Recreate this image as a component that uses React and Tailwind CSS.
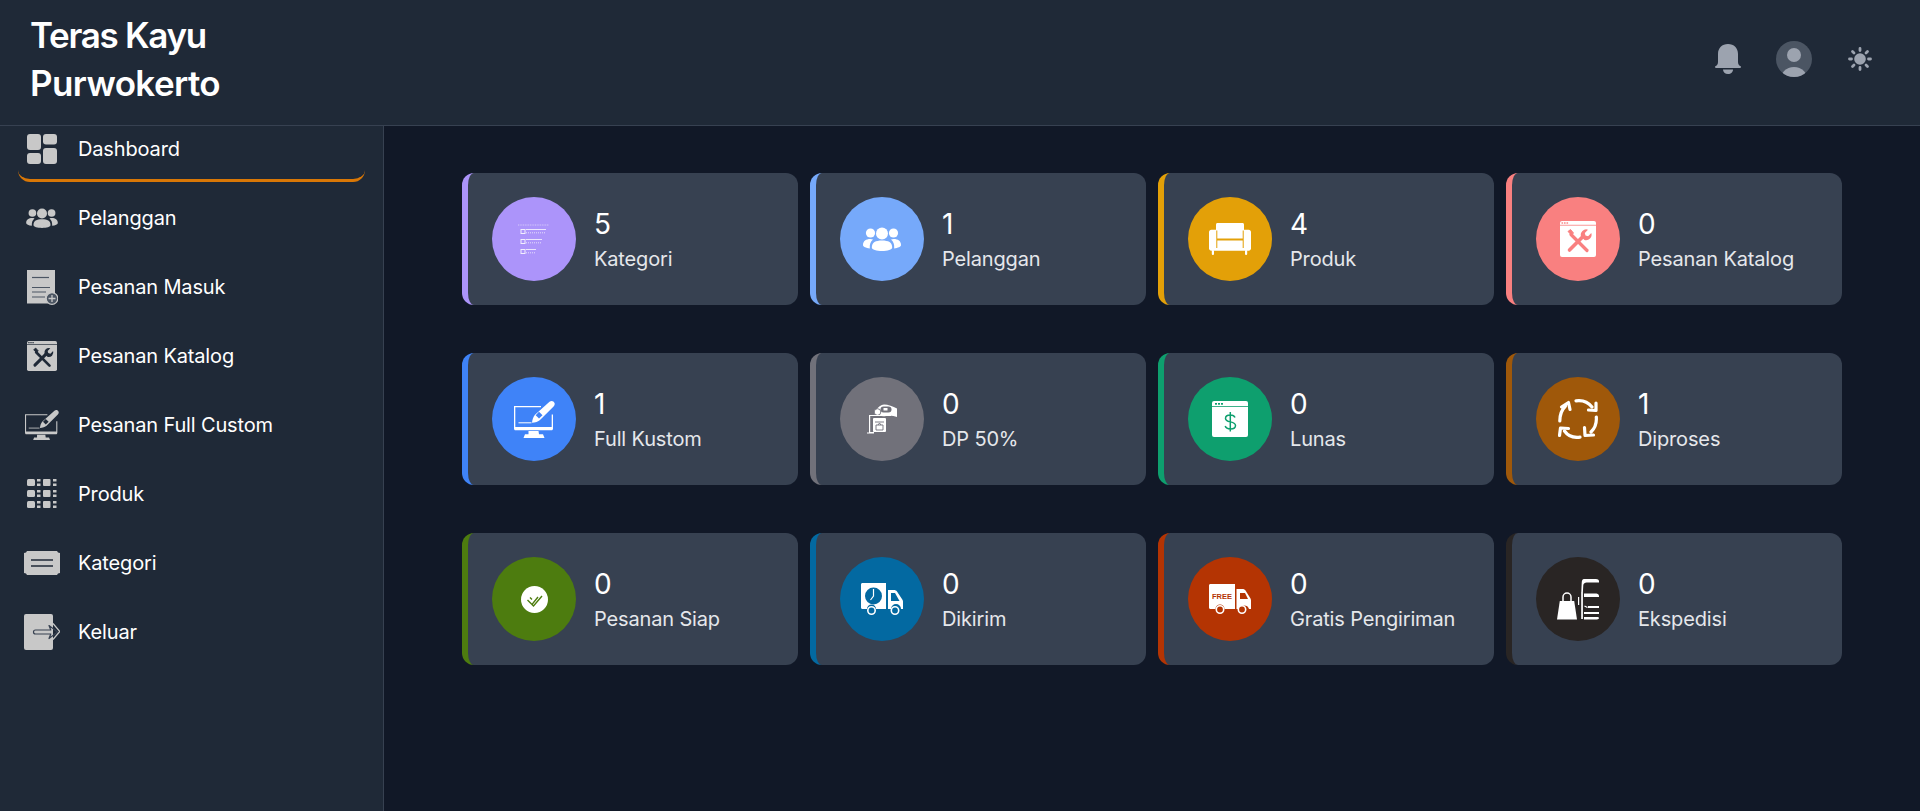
import React from "react";

const People = ({ w = 38, h = 24, c = "#fff" }) => (
  <svg width={w} height={h} viewBox="0 0 38 24" fill={c}>
    <circle cx="19" cy="6.5" r="6" />
    <circle cx="7.5" cy="6" r="4.6" />
    <circle cx="30.5" cy="6" r="4.6" />
    <path d="M8.8 20.5C8.8 15.5 12.5 13.6 19 13.6s10.2 1.9 10.2 6.9C29.2 22.8 24.5 24 19 24S8.8 22.8 8.8 20.5Z" />
    <path d="M7.3 12C3 12 0 14 0 18c0 1.8 3 3 6.8 3.4C6.6 17.6 7.4 14.6 10 12.6 9.2 12.2 8.3 12 7.3 12Z" />
    <path d="M30.7 12C35 12 38 14 38 18c0 1.8-3 3-6.8 3.4C31.4 17.6 30.6 14.6 28 12.6 28.8 12.2 29.7 12 30.7 12Z" />
  </svg>
);

const Tools = ({ w = 36, c = "#fff", bg = "#f98080" }) => (
  <svg width={w} height={w} viewBox="0 0 36 36">
    <rect x="0" y="0" width="36" height="36" rx="2" fill={c} />
    <rect x="0" y="3.8" width="36" height="0.8" fill={bg} />
    <rect x="1.5" y="1.3" width="1.6" height="1.4" fill={bg} />
    <rect x="4" y="1.3" width="1.6" height="1.4" fill={bg} />
    <rect x="6.5" y="1.3" width="1.6" height="1.4" fill={bg} />
    <path d="M11 13.5 L27 29.5" stroke={bg} strokeWidth="3.2" strokeLinecap="round" />
    <path d="M8 10.5 L10.5 8.5 L13.5 12 L11.5 14 Z" fill={bg} stroke={bg} strokeWidth="1" strokeLinejoin="round" />
    <path d="M9.5 29 L22.5 16" stroke={bg} strokeWidth="3.6" strokeLinecap="round" />
    <path d="M21 15.5a5.5 5.5 0 0 1 7-6.8l-3.2 3.2 .7 2.6 2.6 .7 3.2-3.2a5.5 5.5 0 0 1-6.8 7Z" fill={bg} />
  </svg>
);

const Monitor = ({ w = 41, c = "#fff", bg = "#3f83f8" }) => (
  <svg width={w} height={(w * 37) / 41} viewBox="0 0 41 37" fill={c}>
    <path fillRule="evenodd" d="M0 5h27v1.300H1.300V26h36.400V13.500H39v14c0 1-.6 1.800-1.500 1.800H1.500C.6 29.300 0 28.500 0 27.500Z" />
    <path d="M14.500 30h10l.5 3.200h4L30.500 37H9.500l1.500-3.800h3.500Z" />
    <rect x="4.500" y="21.300" width="13" height="1" />
    <path d="M35.500 .8c1.800-1.400 4.300-.8 5 1.200 .5 1.300 .1 2.500-.9 3.500L26 19c-1.500 1.400-5 2.800-8 2.800 .2-3 1.500-6.500 3-8Z" />
    <path d="M25 10.800l3.500 3.500-3.500 3.200-3.300-3.300Z" fill={bg} />
  </svg>
);

const Sofa = ({ c = "#fff", bg = "#e3a008" }) => (
  <svg width="42" height="32" viewBox="0 0 42 32" fill={c}>
    <path d="M7 1.500C7 .6 7.600 0 8.500 0h25c.9 0 1.500.6 1.500 1.500V8h-28Z" />
    <path d="M0 9c0-1.300 1-2.300 2.300-2.300h37.400C41 6.700 42 7.700 42 9v16.500c0 1.200-1 2.300-2.300 2.300H2.300C1 27.800 0 26.700 0 25.500Z" />
    <path d="M8 15.500h26v2H8Z" fill={bg} />
    <path d="M7.300 7.500h1v17.500h-1ZM33.700 7.500h1v17.500h-1Z" fill={bg} />
    <rect x="2.800" y="27" width="2.200" height="5" rx="1" />
    <rect x="36" y="27" width="2.200" height="5" rx="1" />
  </svg>
);

const Window = ({ bg = "#0e9f6e" }) => (
  <svg width="36" height="36" viewBox="0 0 36 36">
    <rect width="36" height="36" rx="2" fill="#fff" />
    <rect y="5" width="36" height="0.8" fill={bg} />
    <rect x="3" y="2" width="2" height="1.7" fill={bg} />
    <rect x="6" y="2" width="2" height="1.7" fill={bg} />
    <rect x="9" y="2" width="2" height="1.7" fill={bg} />
    <path d="M23 16.500c-.6-1.600-2.400-2.500-4.700-2.500-2.800 0-4.800 1.300-4.800 3.400 0 4.600 10 2.300 10 7.100 0 2.100-2.200 3.500-5 3.500-2.600 0-4.700-1-5.300-2.900M18.300 11v19.500" fill="none" stroke={bg} strokeWidth="1.500" />
  </svg>
);

const Cycle = ({ c = "#fff" }) => (
  <svg width="40" height="40" viewBox="0 0 40 40" fill="none" stroke={c} strokeWidth="3.2" strokeLinecap="round" strokeLinejoin="round">
    <path d="M1.800 22C1.800 16 3.500 11 7.500 7" />
    <path d="M3.500 8 L10.500 3.500 L12 10.500" />
    <path d="M18 1.800C24 1 30 3 34 8" />
    <path d="M38 4 L38 11.500 L30.500 11" />
    <path d="M38.300 18C38.800 24 37 29 33 33" />
    <path d="M26.500 28.500 L27 36.500 L35.500 36" />
    <path d="M22 38.200C16 39 10 37 6.500 32" />
    <path d="M1.500 36.500 L2.500 29 L10.500 29.500" />
  </svg>
);

const CheckBadge = () => (
  <svg width="27" height="27" viewBox="0 0 27 27">
    <circle cx="13.500" cy="13.500" r="13.500" fill="#fff" />
    <path d="M6.500 14l4.500 4.500 6-7.500M11 18.500l1.500 1.500L21 10M9 11.500l2 2" fill="none" stroke="#4d7c0f" strokeWidth="1.400" />
  </svg>
);

const TimeTruck = () => (
  <svg width="42" height="32" viewBox="0 0 42 32">
    <path d="M1.500 0H25v26H15a4.500 4.500 0 0 0-9 0H1.500C.6 26 0 25.400 0 24.500V1.500C0 .6.600 0 1.500 0Z" fill="#fff" />
    <path d="M27 7h6c1.300 0 2.300.5 3 1.500l5.300 8c.4.600.7 1.300.7 2V26h-2a5 5 0 0 0-10 0h-3Z" fill="#fff" />
    <path d="M30 10v8h8.500l-4.500-8Z" fill="#0369a1" />
    <circle cx="12.500" cy="13" r="8.500" fill="#0369a1" />
    <path d="M12.500 6v7l-3 4" stroke="#fff" strokeWidth="1.200" fill="none" />
    <circle cx="10.500" cy="27.500" r="3.700" fill="#0369a1" stroke="#fff" strokeWidth="1.600" />
    <circle cx="34" cy="27.500" r="3.700" fill="#0369a1" stroke="#fff" strokeWidth="1.600" />
  </svg>
);

const FreeTruck = () => (
  <svg width="42" height="30" viewBox="0 0 42 30">
    <path d="M1.500 0H26v25H15.500a4.500 4.500 0 0 0-9 0H1.500C.6 25 0 24.400 0 23.500V1.500C0 .6.600 0 1.500 0Z" fill="#fff" />
    <path d="M27.500 5h6c1.300 0 2.300.5 3 1.500l5 8c.3.600.5 1.300.5 2V25h-2a5 5 0 0 0-9.500 0h-3Z" fill="#fff" />
    <path d="M31 9v6h8l-3-6Z" fill="#b43403" />
    <text x="13" y="15" textAnchor="middle" fontSize="7.500" fontWeight="700" fontFamily="Liberation Sans, sans-serif" fill="#b43403">FREE</text>
    <circle cx="11" cy="25.500" r="3.700" fill="#b43403" stroke="#fff" strokeWidth="1.600" />
    <circle cx="33" cy="25.500" r="3.700" fill="#b43403" stroke="#fff" strokeWidth="1.600" />
  </svg>
);

const Expedition = () => (
  <svg width="42" height="41" viewBox="0 0 42 41">
    <path d="M27 0h12c1.500 0 3 .8 3 2v1.500H29.500c-1.500 0-3 1-3.200 2.500l-.4 7h-1.600l.4-9C24.800 1.500 25.500 0 27 0Z" fill="#fff" />
    <path d="M24.200 13h1.700v27h-1.700Z" fill="#fff" />
    <path d="M27 14.500h11c2 0 4 .5 4 2.500v1H27ZM31 27h11v2H31ZM27 33h15v2H27ZM27 38h13c1 0 2 .3 2 1s-1 1.500-2 1.500H27Z" fill="#fff" />
    <rect x="21" y="18" width="1.200" height="8" fill="#fff" />
    <path d="M27.500 27l3 1.500" stroke="#fff" strokeWidth="1.300" />
    <path d="M2.800 22h14.400l2.800 18.500H0Z" fill="#fff" />
    <path d="M6 25v-7a4 4 0 0 1 8 0v7" fill="none" stroke="#fff" strokeWidth="1.500" />
  </svg>
);

const ListIcon = () => (
  <svg width="32" height="30" viewBox="0 0 32 30" fill="#fff" opacity="0.85">
    <path d="M0 1h31" stroke="#fff" strokeWidth="1" strokeDasharray="1 .7" opacity=".6" />
    <rect x="3" y="5.5" width="4" height="4" fill="none" stroke="#fff" strokeWidth="1" />
    <rect x="8" y="5" width="20" height=".9" />
    <path d="M8 8.800h20" stroke="#fff" strokeWidth=".8" strokeDasharray="1 1" />
    <rect x="3" y="15.500" width="4" height="4" fill="none" stroke="#fff" strokeWidth="1" />
    <rect x="8" y="15" width="16" height=".9" />
    <path d="M8 18.800h16" stroke="#fff" strokeWidth=".8" strokeDasharray="1 1" />
    <rect x="3" y="25.500" width="4" height="4" fill="none" stroke="#fff" strokeWidth="1" />
    <rect x="8" y="25" width="10" height=".9" />
    <path d="M8 28.800h10" stroke="#fff" strokeWidth=".8" strokeDasharray="1 1" />
  </svg>
);

const DpIcon = () => (
  <svg width="30" height="30" viewBox="0 0 30 30">
    <path d="M9 6c2-3 5-5.500 8-5.500 4 0 9 2 13 4V13c-3-1-7-1.500-11-1-2 .3-5 .3-7-.5Z" fill="#fff" />
    <circle cx="10.500" cy="8" r="3.300" fill="#fff" stroke="#71717a" strokeWidth=".9" />
    <rect x="13.500" y="2.500" width="11" height="6" rx="3" fill="#71717a" />
    <rect x="16.500" y="4" width="4" height="2.500" fill="#fff" />
    <path d="M2 11h22v1H3.200v16H7v1.500H0v-1h2Z" fill="#fff" />
    <rect x="6" y="14" width="13" height="14" rx="1" fill="#fff" />
    <path d="M8 18h9M9 21h7v5H9ZM11 21l1.500-2 1.500 2" fill="none" stroke="#71717a" strokeWidth=".9" />
  </svg>
);

const nav = [
  { label: "Dashboard", icon: (
    <svg width="30" height="30" viewBox="0 0 30 30" fill="#c8c8c8">
      <rect x="0" y="0" width="14" height="16" rx="3" />
      <rect x="16" y="0" width="14" height="10.5" rx="3" />
      <rect x="0" y="19" width="14" height="11" rx="3" />
      <rect x="16" y="14" width="14" height="16" rx="3" />
    </svg>
  ) },
  { label: "Pelanggan", icon: <People w={32} h={20} c="#c8c8c8" /> },
  { label: "Pesanan Masuk", icon: (
    <svg width="32" height="35" viewBox="0 0 32 35">
      <rect x="1" y="0" width="28" height="33.500" fill="#c8c8c8" />
      <path d="M6 7.500h17" stroke="#4b5563" strokeWidth="1.200" />
      <path d="M6 17.500h18M6 22h14M6 27h13" stroke="#4b5563" strokeWidth="1.200" />
      <circle cx="26" cy="28.500" r="5.800" fill="#4b5563" stroke="#c8c8c8" strokeWidth="1.200" />
      <path d="M26 25v7M22.500 28.500h7" stroke="#c8c8c8" strokeWidth="1.300" />
    </svg>
  ) },
  { label: "Pesanan Katalog", icon: <Tools w={30} c="#c8c8c8" bg="#1f2937" /> },
  { label: "Pesanan Full Custom", icon: <Monitor w={34} c="#c8c8c8" bg="#1f2937" /> },
  { label: "Produk", icon: (
    <svg width="30" height="30" viewBox="0 0 30 30" fill="#c8c8c8">
      <rect x="0" y="0" width="8" height="7" rx="1.500" /><rect x="10" y="0" width="3.500" height="2.500" /><rect x="10" y="4.500" width="3.500" height="2.500" /><rect x="16" y="0" width="7.500" height="7" rx="1" /><rect x="26" y="0" width="3.500" height="2.500" /><rect x="26" y="4.500" width="3.500" height="2.500" />
      <rect x="0" y="11" width="8" height="7" rx="1.500" /><rect x="10" y="11" width="3.500" height="2.500" /><rect x="10" y="15.500" width="3.500" height="2.500" /><rect x="16" y="11" width="7.500" height="7" rx="1" /><rect x="26" y="11" width="3.500" height="2.500" /><rect x="26" y="15.500" width="3.500" height="2.500" />
      <rect x="0" y="22" width="8" height="7" rx="1.500" /><rect x="10" y="22" width="3.500" height="2.500" /><rect x="10" y="26.500" width="3.500" height="2.500" /><rect x="16" y="22" width="7.500" height="7" rx="1" /><rect x="26" y="22" width="3.500" height="2.500" /><rect x="26" y="26.500" width="3.500" height="2.500" />
    </svg>
  ) },
  { label: "Kategori", icon: (
    <svg width="36" height="24" viewBox="0 0 36 24">
      <path d="M3 0h30l1 1.500 2 .5v20l-2 .5-1 1.500H3l-1-1.500-2-.5V2l2-.5Z" fill="#c8c8c8" />
      <path d="M7 9h22M7 15h22" stroke="#1f2937" strokeWidth="1.400" />
    </svg>
  ) },
  { label: "Keluar", icon: (
    <svg width="36" height="36" viewBox="0 0 36 36">
      <rect x="0" y="0" width="29" height="36" rx="2" fill="#c8c8c8" />
      <path d="M11.500 16h15.300l-1.800-4.500L33.500 18 25 24.500l1.800-4.500H11.500a2 2 0 0 1 0-4Z" fill="none" stroke="#374151" strokeWidth="1.200" strokeLinejoin="round" />
      <path d="M29 9.500 L35.800 17.500 L29 25.500" fill="none" stroke="#c8c8c8" strokeWidth="1.200" />
    </svg>
  ) },
];

const stats = [
  { n: "5", label: "Kategori", border: "border-[#ac94fa]", bg: "bg-[#ac94fa]", icon: <ListIcon /> },
  { n: "1", label: "Pelanggan", border: "border-[#76a9fa]", bg: "bg-[#76a9fa]", icon: <People /> },
  { n: "4", label: "Produk", border: "border-[#e3a008]", bg: "bg-[#e3a008]", icon: <Sofa /> },
  { n: "0", label: "Pesanan Katalog", border: "border-[#f98080]", bg: "bg-[#f98080]", icon: <Tools /> },
  { n: "1", label: "Full Kustom", border: "border-[#3f83f8]", bg: "bg-[#3f83f8]", icon: <Monitor /> },
  { n: "0", label: "DP 50%", border: "border-[#71717a]", bg: "bg-[#71717a]", icon: <DpIcon /> },
  { n: "0", label: "Lunas", border: "border-[#0e9f6e]", bg: "bg-[#0e9f6e]", icon: <Window /> },
  { n: "1", label: "Diproses", border: "border-[#9f580a]", bg: "bg-[#9f580a]", icon: <Cycle /> },
  { n: "0", label: "Pesanan Siap", border: "border-[#4d7c0f]", bg: "bg-[#4d7c0f]", icon: <CheckBadge /> },
  { n: "0", label: "Dikirim", border: "border-[#0369a1]", bg: "bg-[#0369a1]", icon: <TimeTruck /> },
  { n: "0", label: "Gratis Pengiriman", border: "border-[#b43403]", bg: "bg-[#b43403]", icon: <FreeTruck /> },
  { n: "0", label: "Ekspedisi", border: "border-[#292524]", bg: "bg-[#292524]", icon: <Expedition /> },
];

export default function App() {
  return (
    <div className="h-screen overflow-hidden flex flex-col bg-[#111827] font-['Inter',sans-serif]">
      <header className="h-[126px] shrink-0 flex items-start justify-between bg-[#1f2937] border-b border-[#374151]">
        <div className="w-[300px] pl-[30px] pt-[11px] text-[35px] leading-[48px] font-semibold text-white">
          <div className="tracking-[-1.3px]">Teras Kayu</div>
          <div className="tracking-[-0.6px]">Purwokerto</div>
        </div>
        <div className="flex items-center pt-[41px] pr-[48px]">
          <svg width="26" height="30" viewBox="0 0 26 30" fill="#9ca3af">
            <path d="M13 0c6 0 10 4 10 10v8c0 2 1 3.500 3 4.500 0 1-.5 1.500-1.500 1.500h-23C.5 24 0 23.500 0 22.500 2 21.500 3 20 3 18v-8C3 4 7 0 13 0Z" />
            <path d="M8 25.500h10c0 2.500-2 4.500-5 4.500s-5-2-5-4.500Z" />
          </svg>
          <div className="ml-[35px] w-9 h-9 rounded-full bg-[#4b5563] overflow-hidden flex flex-col items-center">
            <div className="mt-[7px] w-[14px] h-[14px] shrink-0 rounded-full bg-[#9ca3af]" />
            <div className="mt-[5px] w-[28px] h-[28px] shrink-0 rounded-full bg-[#9ca3af]" />
          </div>
          <svg className="ml-[36px]" width="24" height="24" viewBox="0 0 24 24" fill="#9ca3af" stroke="#9ca3af">
            <circle cx="12" cy="12" r="5.800" stroke="none" />
            <path d="M12 1.500v2M12 20.500v2M1.500 12h2M20.500 12h2M4.500 4.500l1.500 1.500M18 18l1.500 1.500M4.500 19.500L6 18M18 6l1.500-1.500" strokeWidth="2.800" strokeLinecap="round" />
          </svg>
        </div>
      </header>
      <div className="flex-1 flex min-h-0">
        <aside className="w-[384px] shrink-0 bg-[#1f2937] border-r border-[#374151] px-[18px] flex flex-col gap-[3px]">
          {nav.map((item, i) => (
            <div
              key={item.label}
              className={
                i === 0
                  ? "h-[56px] pb-[8px] flex items-center rounded-b-[12px] border-b-[3px] border-[#d97706]"
                  : "h-[66px] flex items-center"
              }
            >
              <span className="w-[36px] ml-[6px] flex justify-center shrink-0">{item.icon}</span>
              <span className="ml-[18px] text-[20px] leading-[28px] text-white tracking-[-0.15px]">{item.label}</span>
            </div>
          ))}
        </aside>
        <main className="flex-1 px-[78px] pt-[47px]">
          <div className="grid grid-cols-4 gap-x-3 gap-y-12">
            {stats.map((s) => (
              <div
                key={s.label}
                className={`h-[132px] rounded-[12px] border-l-[6px] bg-[#374151] pl-[24px] flex items-center ${s.border}`}
              >
                <div className={`w-[84px] h-[84px] rounded-full flex items-center justify-center shrink-0 ${s.bg}`}>
                  {s.icon}
                </div>
                <div className="ml-[18px]">
                  <div className="text-[28px] leading-[36px] text-white">{s.n}</div>
                  <div className="mt-[3px] text-[20px] leading-[28px] text-[#e5e7eb] tracking-[-0.15px]">{s.label}</div>
                </div>
              </div>
            ))}
          </div>
        </main>
      </div>
    </div>
  );
}
